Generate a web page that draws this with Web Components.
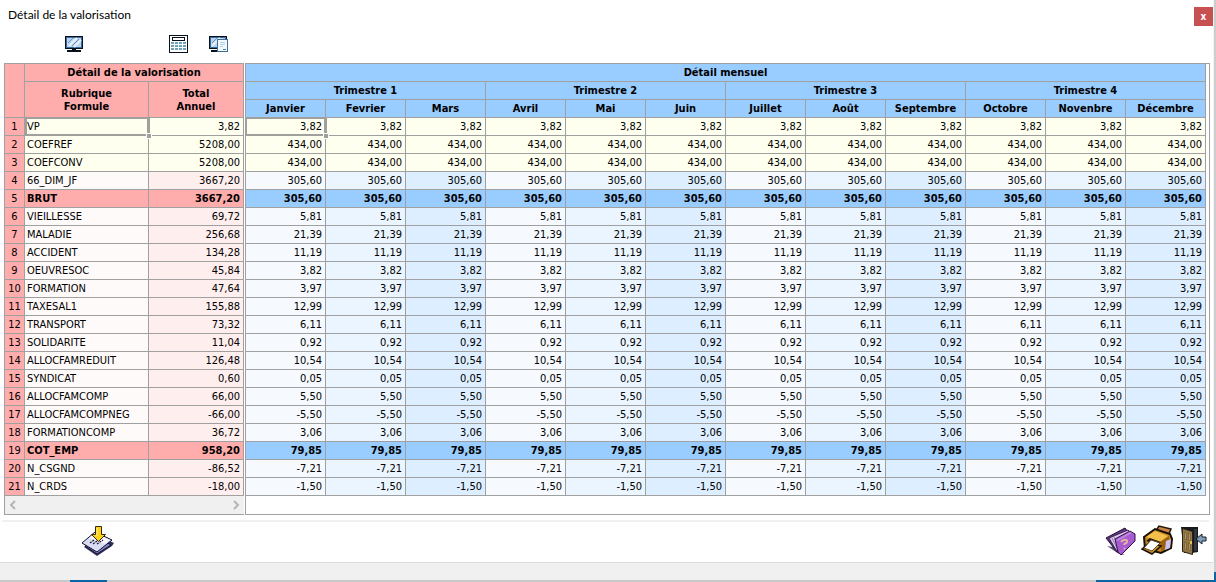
<!DOCTYPE html>
<html lang="fr">
<head>
<meta charset="utf-8">
<title>Détail de la valorisation</title>
<style>
html, body { height: 100%; margin: 0; }
body { font: 11px/16px "DejaVu Sans Condensed", "DejaVu Sans", sans-serif; color: #000; background: #fff; }
</style>
</head>
<body>
<payroll-window>
  <title-bar slot="title">Détail de la valorisation</title-bar>
  <view-toolbar slot="tools"></view-toolbar>
  <summary-grid slot="left"></summary-grid>
  <month-grid slot="right"></month-grid>
  <action-bar slot="actions"></action-bar>
</payroll-window>

<template id="t-window">
<style>
:host { display: flex; flex-direction: column; min-height: 100%; box-sizing: border-box; background: linear-gradient(to top, #0a64a4 10px, #cdcdcd 10px); }
.frame { flex: 1; display: flex; flex-direction: column; background: #fff; margin-right: 2px; border-right: 1px solid #f4f4f4; }
.panes { display: flex; align-items: stretch; padding: 0 3px 0 4px; gap: 1px; }
.panes ::slotted(month-grid) { flex: 1; min-width: 0; }
.status { flex: 1; min-height: 16px; background: #f0f0f0; border-top: 1px solid #dcdcdc; }
.under { display: flex; justify-content: space-between; height: 2px; padding: 0 0 0 70px; background: #c8c8c8; }
.under i { width: 37px; background: #0a64a4; }
.under i:last-child { width: 120px; }
</style>
<div class="frame">
  <slot name="title"></slot>
  <slot name="tools"></slot>
  <div class="panes"><slot name="left"></slot><slot name="right"></slot></div>
  <slot name="actions"></slot>
  <footer class="status"></footer>
</div>
<div class="under"><i></i><i></i></div>
</template>

<template id="t-title">
<style>
:host { display: flex; justify-content: space-between; align-items: flex-start; height: 32px; padding-left: 8px; font: 12px/16px Lato, sans-serif; }
.text { padding-top: 7px; }
button { width: 19px; height: 19px; margin-top: 7px; border: 0; padding: 0; background: #c75050; color: #fff; font: bold 10px/16px "DejaVu Sans Condensed", sans-serif; }
</style>
<span class="text"><slot></slot></span><button type="button" aria-label="Fermer">x</button>
</template>

<template id="t-tools">
<style>
:host { display: flex; height: 31px; padding: 2px 0 0 64px; box-sizing: border-box; gap: 20px; }
button { width: 20px; height: 20px; border: 0; padding: 0; background: none; }
button:first-of-type { margin-right: 64px; }
svg { display: block; }
</style>
<button type="button" aria-label="Écran">
<svg width="20" height="20" viewBox="0 0 20 20" shape-rendering="crispEdges"><path fill="#07101c" d="M1 2h18v13H1zM8 15h4v1H8zM3 16h14v2H3z"/><path fill="#3b6b9b" d="M2 3h16v11H2z"/><path fill="#b9d3f0" d="M3 4h14v9H3z"/><g shape-rendering="auto"><path stroke="#e6f1fd" stroke-width="2" d="M5 12l8-8M10 13l7-7"/><path stroke="#6d93bd" d="M4 9l5-5M8 12l7-7"/></g></svg>
</button>
<button type="button" aria-label="Calculatrice">
<svg width="20" height="20" viewBox="0 0 20 20" shape-rendering="crispEdges"><path fill="#07101c" d="M1 1h19v18H1z"/><path fill="#fff" d="M2 2h17v16H2z"/><path fill="#07101c" d="M4 3h13v4H4z"/><path fill="#fff" d="M5 4h11v2H5z"/><path fill="#6ea3b8" d="M3 8h3v2H3zM7 8h3v2H7zM11 8h3v2h-3zM15 8h3v2h-3zM3 11h3v2H3zM7 11h3v2H7zM11 11h3v2h-3zM15 11h3v2h-3zM3 14h3v2H3zM7 14h3v2H7zM11 14h3v2h-3zM15 14h3v2h-3z"/></svg>
</button>
<button type="button" aria-label="Aperçu">
<svg width="20" height="20" viewBox="0 0 20 20" shape-rendering="crispEdges"><path fill="#07101c" d="M1 2h18v13H1zM3 16h8v2H3z"/><path fill="#3b6b9b" d="M2 3h16v11H2z"/><path fill="#b9d3f0" d="M3 4h14v9H3z"/><g shape-rendering="auto"><path stroke="#e6f1fd" stroke-width="2" d="M4 12l8-8"/><path stroke="#6d93bd" d="M4 9l5-5"/></g><path fill="#3e6f92" d="M9 5h11v13H9z"/><path fill="#f2f8fd" d="M10 6h9v11h-9z"/><path fill="#b4d0e3" d="M12 8h5v1h-5zM12 10h5v1h-5zM12 12h3v1h-3z"/><path fill="#4f7f9f" d="M15 15h3v1h-3z"/></svg>
</button>
</template>

<template id="t-summary">
<style>
:host { display: flex; flex-direction: column; width: 240px; box-sizing: border-box; }
.box { border: 1px solid #a0a0a0; border-width: 1px 0 0 1px; }
table { border-collapse: separate; border-spacing: 0; table-layout: fixed; width: 100%; }
th, td { box-sizing: border-box; height: 18px; padding: 0 3px 0 2px; border: 1px solid #a0a0a0; border-width: 0 1px 1px 0; line-height: 16px; font-weight: normal; text-align: left; white-space: nowrap; overflow: hidden; }
td { padding-top: 1px; }
thead th { background: #ffacac; font-weight: bold; text-align: center; padding: 0; }
thead th.tall { height: 36px; line-height: 13px; }
tbody th { background: #ffacac; text-align: center; padding: 0; }
td.n { background: #fffafa; }
td.v { background: #ffeeee; text-align: right; }
tr.y td { background: #fffff0; }
tr.s td { background: #ffacac; font-weight: bold; }
td.sel { position: relative; overflow: visible; }
td.sel::before { content: ""; position: absolute; inset: -1px -2px -1px 0; border: 2px solid #a0a09c; border-right-width: 3px; }
td.sel::after { content: ""; position: absolute; right: -4px; bottom: -4px; width: 4px; height: 4px; background: #a0a09c; border: 1px solid #fff; }
.scroll { display: flex; justify-content: space-between; align-items: center; height: 18px; padding: 0 4px; background: #f0f0f0; border: 1px solid #a0a0a0; border-width: 0 0 1px 1px; }
.scroll button { width: 9px; height: 12px; border: 0; padding: 0; background: none; }
svg { display: block; fill: none; stroke: #b5b5b5; stroke-width: 2; }
</style>
<div class="box"><table>
<colgroup><col style="width:20px"><col style="width:124px"><col></colgroup>
<thead><tr><th rowspan="2"></th><th colspan="2">Détail de la valorisation</th></tr>
<tr><th class="tall">Rubrique<br>Formule</th><th class="tall">Total<br>Annuel</th></tr></thead>
<tbody></tbody></table></div>
<div class="scroll"><button type="button" aria-label="Défiler à gauche"><svg width="9" height="12"><path d="M6 2L2 6l4 4"/></svg></button><button type="button" aria-label="Défiler à droite"><svg width="9" height="12"><path d="M3 2l4 4-4 4"/></svg></button></div>
</template>

<template id="t-months">
<style>
:host { display: block; box-sizing: border-box; border: 1px solid #a0a0a0; padding-right: 3px; }
table { border-collapse: separate; border-spacing: 0; table-layout: fixed; width: 100%; }
th, td { box-sizing: border-box; height: 18px; padding: 0 3px 0 2px; border: 1px solid #a0a0a0; border-width: 0 1px 1px 0; line-height: 16px; text-align: right; white-space: nowrap; }
td { padding-top: 1px; }
th { background: #99ccff; text-align: center; padding: 0; }
td { background: #f6faff; }
td:nth-child(3n+2) { background: #ebf5ff; }
td:nth-child(3n) { background: #dceeff; }
tr.y td { background: #fffff0; }
tr.s td { background: #99ccff; font-weight: bold; }
td.sel { position: relative; }
td.sel::before { content: ""; position: absolute; inset: -1px -2px -1px -1px; border: 2px solid #a0a09c; border-right-width: 3px; }
td.sel::after { content: ""; position: absolute; right: -4px; bottom: -4px; width: 4px; height: 4px; background: #a0a09c; border: 1px solid #fff; }
</style>
<table><thead></thead><tbody></tbody></table>
</template>

<template id="t-actions">
<style>
:host { display: flex; align-items: flex-start; position: relative; gap: 2px; height: 47px; padding: 0 3px 0 81px; box-sizing: border-box; }
button { width: 34px; height: 34px; margin-top: 9px; padding: 0; border: 0; background: none; }
button:first-of-type { margin-right: auto; }
hr { position: absolute; top: 5px; left: 2px; right: 4px; height: 2px; margin: 0; border: 0; background: #f0f0f0; }
svg { display: block; }
</style>
<hr>
<button type="button" aria-label="Enregistrer"><svg width="34" height="34" viewBox="0 0 34 34"><path fill="#34345c" d="M5 21l16-8 12 6-2 3-15 10L3 23z"/><path fill="#7f83b8" stroke="#101030" d="M4 22l14-8 12 7-14 9z"/><path fill="#dadcf4" stroke="#101030" d="M1 19l13-11 17 8-15 12z"/><path fill="#f4f5ff" d="M8 14l6-5 15 7-5 4z"/><path stroke="#16162e" stroke-width="1.200" stroke-dasharray="2 1" d="M9 19l4-3M12 20l8-6M16 20l6-4"/><path fill="#ffd21a" stroke="#35280a" d="M14.500 2.500h6v8h4l-7 7-7-7h4z"/><path stroke="#fff08a" d="M16 4v8"/></svg></button>
<button type="button" aria-label="Aide"><svg width="34" height="34" viewBox="0 0 34 34"><path fill="#665178" d="M3 22l12 8 5 1-5-7z"/><path fill="#633487" stroke="#22102f" d="M2 14L21 4l3 4-6 21-5-1z"/><path fill="#d9cbe8" stroke="#3b2455" d="M5 14L24 6l2 3-11 19-3-2z"/><path stroke="#8f78ab" d="M8 14l7 14M10 13l7 15"/><path fill="#a65cd0" stroke="#321045" d="M11 15l15-8 5 3v7L17 31l-3-3z"/><path fill="#be86e0" d="M12 16l14-8 2 1-14 8z"/><path fill="none" stroke="#e6b2a0" stroke-width="2" d="M17 18c2-3 7-3 6 0-1 2-3 1-3 3M20 24l1 1"/></svg></button>
<button type="button" aria-label="Imprimer"><svg width="34" height="34" viewBox="0 0 34 34"><path fill="#c8824a" stroke="#24170a" stroke-width="1.500" d="M15 8l4-6 12 3-3 7z"/><path fill="#c88820" stroke="#181005" stroke-width="2" d="M4 13l11-8 15 5 2 5-1 9-10 5-16-4z"/><path fill="#f4c04a" d="M6 13l9-6 13 5-8 6z"/><path fill="#9b6112" d="M20 18l9-6 1 11-9 4z"/><path fill="#cbc3ee" d="M26 17l5-2-1 9-5 2z"/><path fill="#281a08" d="M6 17l4-3 11 4-3 3z"/><path fill="#d39529" stroke="#181005" stroke-width="1.500" d="M2 25l8-7 11 4-9 8z"/><path fill="#fff" stroke="#5a4821" d="M4 24l7-8 9 3-8 8z"/></svg></button>
<button type="button" aria-label="Quitter"><svg width="34" height="34" viewBox="0 0 34 34"><path fill="#17191e" d="M5 3h17v25l-6 1H8z"/><path fill="#34373d" d="M18 5h3v22h-3z"/><path fill="#927849" stroke="#2a2110" d="M6.500 4.500l10 3v23l-10-3z"/><path fill="#ae9564" stroke="#7d6539" d="M8.500 8l2 1v7l-2-1zM12.500 9l2 1v7l-2-1zM8.500 18l2 1v7l-2-1zM12.500 19l2 1v7l-2-1z"/><path fill="#e2c44a" d="M14 17h2v3h-2z"/><path fill="#829fb8" stroke="#14202c" d="M20 15l6-5v3h4v4h-4v3z"/></svg></button>
</template>

<script>
const ROWS = [
  ["VP", "3,82", "3,82", "y"], ["COEFREF", "5208,00", "434,00", "y"], ["COEFCONV", "5208,00", "434,00", "y"],
  ["66_DIM_JF", "3667,20", "305,60"], ["BRUT", "3667,20", "305,60", "s"], ["VIEILLESSE", "69,72", "5,81"],
  ["MALADIE", "256,68", "21,39"], ["ACCIDENT", "134,28", "11,19"], ["OEUVRESOC", "45,84", "3,82"],
  ["FORMATION", "47,64", "3,97"], ["TAXESAL1", "155,88", "12,99"], ["TRANSPORT", "73,32", "6,11"],
  ["SOLIDARITE", "11,04", "0,92"], ["ALLOCFAMREDUIT", "126,48", "10,54"], ["SYNDICAT", "0,60", "0,05"],
  ["ALLOCFAMCOMP", "66,00", "5,50"], ["ALLOCFAMCOMPNEG", "-66,00", "-5,50"], ["FORMATIONCOMP", "36,72", "3,06"],
  ["COT_EMP", "958,20", "79,85", "s"], ["N_CSGND", "-86,52", "-7,21"], ["N_CRDS", "-18,00", "-1,50"]
];
const MONTHS = ["Janvier", "Fevrier", "Mars", "Avril", "Mai", "Juin", "Juillet", "Août", "Septembre", "Octobre", "Novenbre", "Décembre"];

class Base extends HTMLElement {
  constructor() {
    super();
    this.attachShadow({ mode: "open" }).append(document.getElementById(this.constructor.template).content.cloneNode(true));
  }
}
customElements.define("payroll-window", class extends Base { static template = "t-window"; });
customElements.define("title-bar", class extends Base { static template = "t-title"; });
customElements.define("view-toolbar", class extends Base { static template = "t-tools"; });
customElements.define("action-bar", class extends Base { static template = "t-actions"; });
customElements.define("summary-grid", class extends Base {
  static template = "t-summary";
  constructor() {
    super();
    this.shadowRoot.querySelector("tbody").innerHTML = ROWS.map(([name, total, , kind = ""], i) =>
      `<tr class="${kind}"><th scope="row">${i + 1}</th><td class="n${i ? "" : " sel"}">${name}</td><td class="v">${total}</td></tr>`).join("");
  }
});
customElements.define("month-grid", class extends Base {
  static template = "t-months";
  constructor() {
    super();
    this.shadowRoot.querySelector("thead").innerHTML =
      `<tr><th colspan="12">Détail mensuel</th></tr><tr>` +
      [1, 2, 3, 4].map(q => `<th colspan="3">Trimestre ${q}</th>`).join("") + "</tr><tr>" +
      MONTHS.map(m => `<th scope="col">${m}</th>`).join("") + "</tr>";
    this.shadowRoot.querySelector("tbody").innerHTML = ROWS.map(([, , value, kind = ""], r) =>
      `<tr class="${kind}">` + MONTHS.map((m, c) => `<td${r + c ? "" : ' class="sel"'}>${value}</td>`).join("") + "</tr>").join("");
  }
});
</script>
</body>
</html>
